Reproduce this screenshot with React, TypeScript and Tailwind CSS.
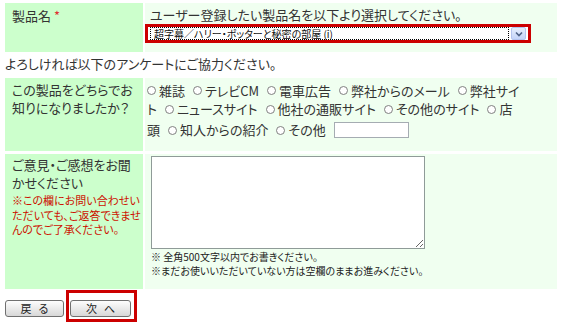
import type { ReactNode } from "react";

const OPTION_LINES: string[][] = [
  ["雑誌", "テレビCM", "電車広告", "弊社からのメール", "弊社サイ"],
  ["ト", "ニュースサイト", "他社の通販サイト", "その他のサイト", "店"],
];

function Radio({ children }: { children: ReactNode }) {
  return (
    <span className="mr-[8px] inline-flex items-center whitespace-nowrap">
      <span className="mr-[3px] inline-block h-[9px] w-[9px] rounded-full border border-[#808080] bg-white" />
      {children}
    </span>
  );
}

function Button({ label }: { label: string }) {
  return (
    <button
      type="button"
      className="flex h-[17px] w-full items-center justify-center gap-[7px] rounded-[3px] border border-[#707070] bg-gradient-to-b from-[#fdfdfd] to-[#d8d8d8] text-[11px] leading-none text-[#222]"
    >
      {label.split("").map((ch) => (
        <span key={ch}>{ch}</span>
      ))}
    </button>
  );
}

export default function App() {
  return (
    <div className="h-[323px] w-[565px] overflow-hidden bg-white pl-[5px] pt-[3px] font-['Noto_Sans_CJK_JP',sans-serif] text-[13px] leading-[18px] text-[#333] [font-feature-settings:'palt']">
      {/* 製品名 */}
      <div className="grid w-[552px] grid-cols-[138px_1fr] gap-[2px]">
        <div className="h-[49px] bg-[#ccffcc] pl-[7px] pt-[4px]">
          製品名 <span className="text-[#e03030]">*</span>
        </div>
        <div className="bg-[#f0fff0] pt-[3px]">
          <p className="pl-[5px]">ユーザー登録したい製品名を以下より選択してください。</p>
          <div className="w-[386px] border-[3px] border-[#cc0000] bg-white">
            <div className="flex h-[13px] items-stretch pl-[2px]">
              <div className="flex flex-1 items-center border border-dotted border-black px-[3px] text-[10px] leading-none text-[#111]">
                超字幕／ハリー・ポッターと秘密の部屋 (i)
              </div>
              <div className="ml-[2px] mr-[2px] flex w-[15px] items-center justify-center rounded-[2px] border border-[#b4c4ee] bg-gradient-to-b from-[#e6eefc] to-[#c4d4f8]">
                <svg width="8" height="6" viewBox="0 0 8 6">
                  <path d="M1 1.5 L4 4.5 L7 1.5" fill="none" stroke="#4d6185" strokeWidth="1.6" />
                </svg>
              </div>
            </div>
          </div>
        </div>
      </div>

      <p className="mt-[3px]">よろしければ以下のアンケートにご協力ください。</p>

      {/* アンケート */}
      <div className="mt-[5px] grid w-[552px] grid-cols-[138px_1fr] gap-[3px_2px]">
        <div className="h-[73px] bg-[#ccffcc] pl-[7px] pt-[3px]">
          この製品をどちらでお
          <br />
          知りになりましたか？
        </div>
        <div className="bg-[#f0fff0] pl-[2px] pt-[3px]">
          {OPTION_LINES.map((line, i) => (
            <div key={i} className="whitespace-nowrap">
              {line.map((o, j) =>
                i === 1 && j === 0 ? (
                  <span key={o} className="mr-[8px]">
                    {o}
                  </span>
                ) : (
                  <Radio key={o}>{o}</Radio>
                ),
              )}
            </div>
          ))}
          <div className="mt-[3px] flex items-center whitespace-nowrap">
            <span className="mr-[8px]">頭</span>
            <Radio>知人からの紹介</Radio>
            <Radio>その他</Radio>
            <span className="inline-block h-[16px] w-[75px] border border-[#a5acb2] bg-white" />
          </div>
        </div>

        <div className="h-[135px] bg-[#ccffcc] pl-[7px] pt-[2px]">
          ご意見・ご感想をお聞
          <br />
          かせください
          <p className="mt-[1px] text-[11px] leading-[14.5px] text-[#cc1100]">
            ※この欄にお問い合わせい
            <br />
            ただいても、ご返答できませ
            <br />
            んのでご了承ください。
          </p>
        </div>
        <div className="bg-[#f0fff0] pl-[6px] pt-[2px]">
          <textarea
            readOnly
            className="block h-[93px] w-[274px] resize border border-[#8f9b98] bg-white"
          />
          <p className="mt-[1px] text-[10px] leading-[14px] text-[#222]">
            ※ 全角500文字以内でお書きください。
            <br />
            ※まだお使いいただいていない方は空欄のままお進みください。
          </p>
        </div>
      </div>

      {/* ボタン */}
      <div className="mt-[1px] flex items-start">
        <div className="mt-[10px] w-[59px]">
          <Button label="戻る" />
        </div>
        <div className="ml-[2px] h-[32px] w-[71px] border-[3px] border-[#cc0000] pl-[1px] pr-[3px] pt-[7px]">
          <Button label="次へ" />
        </div>
      </div>
    </div>
  );
}
